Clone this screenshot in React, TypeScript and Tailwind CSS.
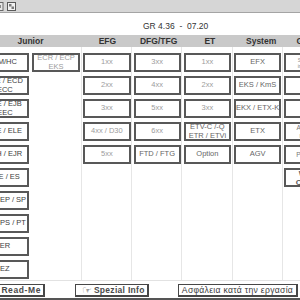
import React from "react";

type Cell = { lines?: string[]; tone?: "dark" | "mid" | "light"; custom?: React.ReactNode };

const toneClass = {
  dark: "text-[#3c3c3c]",
  mid: "text-[#666666]",
  light: "text-[#9c9c9c]",
};

const columns: Cell[][] = [
  [
    { lines: ["AM/HC"], tone: "dark" },
    { lines: ["EJE / ECD", "ECC"], tone: "dark" },
    { lines: ["EJE / EJB", "EEC"], tone: "dark" },
    { lines: ["EJE / ELE"], tone: "dark" },
    { lines: ["EJH / EJR"], tone: "dark" },
    { lines: ["EJE / ES"], tone: "dark" },
    { lines: ["ES / EP / SP"], tone: "dark" },
    { lines: ["KS / PS / PT"], tone: "dark" },
    { lines: ["ER"], tone: "dark" },
    { lines: ["EZ"], tone: "dark" },
  ],
  [{ lines: ["ECR / ECP", "EKS"], tone: "light" }],
  [
    { lines: ["1xx"], tone: "light" },
    { lines: ["2xx"], tone: "light" },
    { lines: ["3xx"], tone: "light" },
    { lines: ["4xx / D30"], tone: "light" },
    { lines: ["5xx"], tone: "light" },
  ],
  [
    { lines: ["3xx"], tone: "light" },
    { lines: ["4xx"], tone: "light" },
    { lines: ["5xx"], tone: "light" },
    { lines: ["6xx"], tone: "light" },
    { lines: ["FTD / FTG"], tone: "mid" },
  ],
  [
    { lines: ["1xx"], tone: "light" },
    { lines: ["2xx"], tone: "light" },
    { lines: ["3xx"], tone: "light" },
    { lines: ["ETV-C /-Q", "ETR / ETVi"], tone: "mid" },
    { lines: ["Option"], tone: "mid" },
  ],
  [
    { lines: ["EFX"], tone: "mid" },
    { lines: ["EKS / KmS"], tone: "mid" },
    { lines: ["EKX / ETX-K"], tone: "mid" },
    { lines: ["ETX"], tone: "mid" },
    { lines: ["AGV"], tone: "mid" },
  ],
  [
    {
      custom: (
        <div className="flex flex-col self-stretch justify-center pl-[1px] text-[5px] leading-[6px] text-[#8a8a8a]">
          <span>Summary</span>
          <span>images</span>
        </div>
      ),
    },
    { custom: null },
    { custom: null },
    {
      custom: (
        <div className="flex flex-col self-stretch justify-center pl-[1px] text-[6.5px] leading-[8px] text-[#777777]">
          <span>Antriebs</span>
          <span className="pl-[3px]">motor</span>
        </div>
      ),
    },
    {
      custom: (
        <div className="flex self-stretch items-center pl-[1px] text-[6.5px] text-[#777777]">
          Pumpen
        </div>
      ),
    },
    {
      custom: (
        <div className="flex flex-col self-stretch justify-center pl-[1px] text-[8px] leading-[9px] font-bold text-[#5a5a5a]">
          <span className="pl-[3px]">Web</span>
          <span>Config</span>
        </div>
      ),
    },
  ],
];

function Box({ cell }: { cell: Cell }) {
  return (
    <div className="h-[19px] mx-[1.5px] border-2 border-[#585858] bg-white flex items-center justify-center overflow-hidden">
      {cell.custom !== undefined ? (
        cell.custom
      ) : (
        <div
          className={`flex flex-col items-center text-[7.5px] leading-[8.5px] whitespace-nowrap ${toneClass[cell.tone ?? "light"]}`}
        >
          {cell.lines?.map((l, i) => (
            <span key={i}>{l}</span>
          ))}
        </div>
      )}
    </div>
  );
}

const headers = ["EFG", "DFG/TFG", "ET", "System", "General"];

export default function App() {
  return (
    <div className="w-[300px] h-[300px] overflow-hidden bg-white flex flex-col font-['Liberation_Sans',Arial,sans-serif]">
      {/* window bar */}
      <div className="h-[13px] shrink-0 bg-[#d6d6d6] border-b border-[#a4a4a4] flex items-center">
        <svg width="4" height="9" viewBox="0 0 4 9" className="mt-[1px]">
          <rect x="-5" y="0.5" width="8" height="8" fill="#e8e8e8" stroke="#6a6a6a" />
          <rect x="-3" y="3" width="4" height="3" fill="#8a8a8a" />
        </svg>
        <svg width="9" height="9" viewBox="0 0 9 9" className="ml-[3px] mt-[1px]">
          <rect x="0.5" y="0.5" width="8" height="8" fill="#f2f2f2" stroke="#5a5a5a" />
          <rect x="2" y="2" width="2.5" height="2.5" fill="#7a7a7a" />
          <rect x="4.5" y="4.5" width="2.5" height="2.5" fill="#7a7a7a" />
        </svg>
      </div>

      {/* version */}
      <div className="h-[22px] shrink-0 pl-[143px] pt-[8px] text-[8.5px] leading-[10px] text-[#333] whitespace-pre">
        GR 4.36  -  07.20
      </div>

      {/* header band */}
      <div className="h-[12px] shrink-0 ml-[-20.75px] flex bg-[#c9c9c9] text-[8.5px] leading-[12px] font-bold text-[#333]">
        <div className="w-[102.5px] shrink-0 text-center">Junior</div>
        {headers.map((h) => (
          <div key={h} className="w-[51.25px] shrink-0 text-center whitespace-nowrap">
            {h}
          </div>
        ))}
      </div>

      {/* columns */}
      <div className="h-[234px] shrink-0 ml-[-20.75px] flex border-b border-[#e2e2e2]">
        {columns.map((col, ci) => (
          <div
            key={ci}
            className={`w-[51.25px] shrink-0 flex flex-col gap-[4px] pt-[6px] ${ci >= 2 ? "border-l border-[#e6e6e6] ml-[-1px]" : ""}`}
          >
            {col.map((cell, ri) => (
              <Box key={ri} cell={cell} />
            ))}
          </div>
        ))}
      </div>

      {/* bottom buttons */}
      <div className="h-[17px] shrink-0 ml-[-8px] pt-[3px] flex items-start">
        <div className="w-[53px] h-[13px] border border-r-2 border-b-2 border-[#474747] bg-white flex items-center justify-end pr-[2px] text-[8.5px] font-bold tracking-[0.6px] text-[#4a4a4a] whitespace-nowrap">
          Read-Me
        </div>
        <div className="ml-[30px] w-[74px] h-[13px] border border-r-2 border-b-2 border-[#474747] bg-white flex items-center pl-[6px] gap-[2px] text-[8.5px] font-bold tracking-[0.3px] text-[#4a4a4a] whitespace-nowrap overflow-hidden">
          <span className="font-['DejaVu_Sans',sans-serif] text-[11px] leading-[11px] font-normal tracking-normal text-[#555]">☞</span>
          <span>Spezial Info</span>
        </div>
        <div className="ml-[29px] w-[120px] h-[13px] border border-r-2 border-b-2 border-[#474747] bg-white flex items-center justify-center text-[8.6px] tracking-[0.3px] text-[#3a3a3a] whitespace-nowrap">
          Ασφάλεια κατά την εργασία
        </div>
      </div>

      <div className="flex-1 bg-[#555]" />
    </div>
  );
}
